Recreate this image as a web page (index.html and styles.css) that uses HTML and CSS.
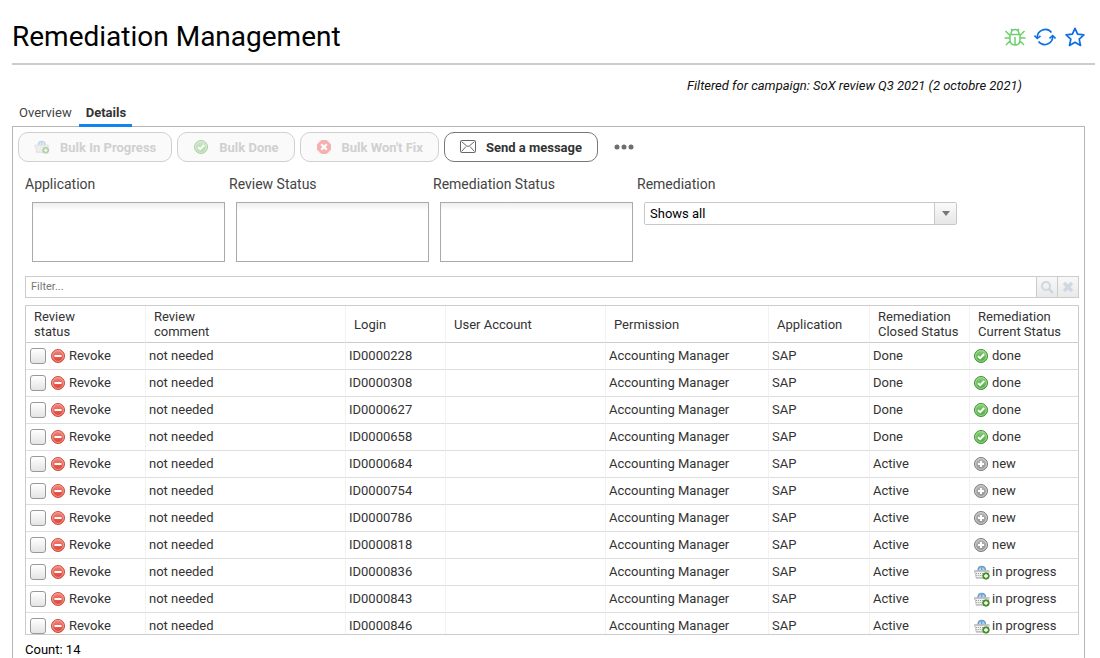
FILE: index.html
```html
<!DOCTYPE html>
<html lang="en">
<head>
<meta charset="utf-8">
<title>Remediation Management</title>
<link rel="stylesheet" href="styles.css">
</head>
<body>
<svg class="sprite" aria-hidden="true">
  <defs>
    <linearGradient id="g-red" x1="0" y1="0" x2="0" y2="1"><stop offset="0" stop-color="#f08a80"/><stop offset="1" stop-color="#dc3a2c"/></linearGradient>
    <linearGradient id="g-green" x1="0" y1="0" x2="0" y2="1"><stop offset="0" stop-color="#8bd07a"/><stop offset="1" stop-color="#45a838"/></linearGradient>
    <linearGradient id="g-gray" x1="0" y1="0" x2="0" y2="1"><stop offset="0" stop-color="#b8b8b8"/><stop offset="1" stop-color="#939393"/></linearGradient>
  </defs>
  <symbol id="revoke" viewBox="0 0 14 14">
    <circle cx="7" cy="7" r="6.5" fill="url(#g-red)" stroke="#cf4a3f"/>
    <circle cx="7" cy="7" r="5.4" fill="none" stroke="#f6aaa2" stroke-width=".8"/>
    <rect x="3.5" y="6" width="7" height="2" fill="#fff"/>
  </symbol>
  <symbol id="done" viewBox="0 0 14 14">
    <circle cx="7" cy="7" r="6.5" fill="url(#g-green)" stroke="#3f8f35"/>
    <circle cx="7" cy="7" r="5.4" fill="none" stroke="#b0e0a5" stroke-width=".8"/>
    <path d="M4 7.2 6.2 9.2 10.2 5" fill="none" stroke="#fff" stroke-width="1.9"/>
  </symbol>
  <symbol id="new" viewBox="0 0 14 14">
    <circle cx="7" cy="7" r="6.5" fill="url(#g-gray)" stroke="#7c7c7c"/>
    <circle cx="7" cy="7" r="5.4" fill="none" stroke="#d8d8d8" stroke-width=".8"/>
    <path d="M7 4v6M4 7h6" stroke="#fff" stroke-width="2"/>
  </symbol>
  <symbol id="cross" viewBox="0 0 14 14">
    <path d="M4.2.5h5.6l3.7 3.7v5.6l-3.7 3.7H4.2L.5 9.8V4.2z" fill="#f0433e" stroke="#e2574e"/>
    <path d="m4.2 4.2 5.6 5.6M9.8 4.2 4.2 9.8" stroke="#fff" stroke-width="2.3"/>
  </symbol>
  <symbol id="basket" viewBox="0 0 16 15">
    <path d="M4 6C4 3 5.500 1.500 7.700 1.500S11.500 3 11.500 6" fill="#b4d2ea" stroke="#6aa0cc" stroke-width="1.500"/>
    <path d="M7.700 1v5" stroke="#6aa0cc" stroke-width="1.200"/>
    <path d="M.4 5.500h14.700v2h-.8l-1 5.800H2.200l-1-5.800H.4z" fill="#f2f2f2" stroke="#b0b0b0" stroke-width=".7"/>
    <path d="M1 6.500h13.500" stroke="#c4c4c4"/>
    <path d="M2 8.500h11.500M2.300 10.500h10.500M2.600 12.500h10" stroke="#9a9a9a" stroke-dasharray="1 1"/>
    <circle cx="12" cy="11" r="3.300" fill="#4c9b2b" stroke="#39791f" stroke-width=".7"/>
    <path d="M12 9v4M10 11h4" stroke="#fff" stroke-width="1.300"/>
  </symbol>
</svg>

<header class="page-header">
  <h1>Remediation Management</h1>
  <div class="page-actions">
    <button type="button" class="icon-button bug" aria-label="Debug">
      <svg viewBox="0 0 22 20" width="22" height="20" fill="none" stroke="currentColor" stroke-width="1.500"><path d="M7 7.500C7 4 8.500 2.500 11 2.500S15 4 15 7.500M6 7.500h10v5c0 3.500-2 5.500-5 5.500s-5-2-5-5.500zM11 10v8M8 3.500 7 2M14 3.500 15 2M6 8.500 1.500 4M16 8.500 20.500 4M6 11H.5M16 11h5.500M6.500 13.500 2 18M15.500 13.500 20 18"/></svg>
    </button>
    <button type="button" class="icon-button" aria-label="Refresh">
      <svg viewBox="0 0 22 20" width="22" height="20" fill="none" stroke="currentColor" stroke-width="1.600"><path d="M17.500 5.500A8 8 0 0 0 3.300 11M4.500 14.500A8 8 0 0 0 18.700 9"/><path d="m.5 8.500 2.800 3 3.200-2.700M15.500 11.300l3.200-2.800 2.800 3"/></svg>
    </button>
    <button type="button" class="icon-button" aria-label="Add to favourites">
      <svg viewBox="0 0 22 20" width="22" height="20" fill="none" stroke="currentColor" stroke-width="1.700" stroke-linejoin="round"><path d="m11 1.300 2.600 5.900 6.300.7-4.700 4.300 1.300 6.300L11 15.300l-5.500 3.200 1.300-6.300L2.100 7.900l6.300-.7z"/></svg>
    </button>
  </div>
</header>

<p class="campaign">Filtered for campaign: SoX review Q3 2021 (2 octobre 2021)</p>

<nav class="tabs">
  <a class="tab" href="#overview">Overview</a>
  <a class="tab active" href="#details" aria-current="page">Details</a>
</nav>

<main class="panel" id="details">
  <div class="toolbar">
    <button type="button" class="action" disabled><svg class="icon wide"><use href="#basket"/></svg>Bulk In Progress</button>
    <button type="button" class="action" disabled><svg class="icon wide"><use href="#done"/></svg>Bulk Done</button>
    <button type="button" class="action" disabled><svg class="icon wide"><use href="#cross"/></svg>Bulk Won't Fix</button>
    <button type="button" class="action"><svg class="icon wide" viewBox="0 0 16 14" fill="none" stroke="#666"><rect x=".5" y=".5" width="15" height="12" rx="1"/><path d="m1.500 1.500 5 4.300q1.500 1.200 3 0l5-4.300M1.500 11.500l4.500-5M14.500 11.500 10 6.500"/></svg>Send a message</button>
    <button type="button" class="more" aria-label="More actions"><svg viewBox="0 0 20 6" width="20" height="6" fill="#6e6e6e"><circle cx="3" cy="3" r="2.500"/><circle cx="10" cy="3" r="2.500"/><circle cx="17" cy="3" r="2.500"/></svg></button>
  </div>

  <div class="criteria">
    <div class="field"><label for="application">Application</label><textarea id="application"></textarea></div>
    <div class="field"><label for="review">Review Status</label><textarea id="review"></textarea></div>
    <div class="field"><label for="status">Remediation Status</label><textarea id="status"></textarea></div>
    <div class="field select-field"><label for="remediation">Remediation</label>
      <div class="select-box"><select id="remediation"><option>Shows all</option></select><span class="arrow"></span></div>
    </div>
  </div>

  <div class="search">
    <input type="text" placeholder="Filter..." aria-label="Filter">
    <button type="button" aria-label="Search"><svg viewBox="0 0 14 14" width="14" height="14" fill="none" stroke="#d0d7e0" stroke-width="2"><circle cx="6" cy="6" r="4"/><path d="m9 9 4 4" stroke-width="2.500"/></svg></button>
    <button type="button" aria-label="Clear"><svg viewBox="0 0 14 14" width="14" height="14" stroke="#d0d7e0" stroke-width="3.500"><path d="m3 3 8 8M11 3l-8 8"/></svg></button>
  </div>

  <div class="grid">
    <table>
      <colgroup><col class="c-status"><col class="c-comment"><col class="c-login"><col class="c-account"><col class="c-permission"><col class="c-app"><col class="c-closed"><col class="c-current"></colgroup>
      <thead><tr><th>Review<br>status</th><th>Review<br>comment</th><th>Login</th><th>User Account</th><th>Permission</th><th>Application</th><th>Remediation<br>Closed Status</th><th>Remediation<br>Current Status</th></tr></thead>
      <tbody>
        <tr><td><label class="cell"><input type="checkbox"><svg class="icon"><use href="#revoke"/></svg>Revoke</label></td><td>not needed</td><td>ID0000228</td><td></td><td>Accounting Manager</td><td>SAP</td><td>Done</td><td><span class="cell"><svg class="icon"><use href="#done"/></svg>done</span></td></tr>
        <tr><td><label class="cell"><input type="checkbox"><svg class="icon"><use href="#revoke"/></svg>Revoke</label></td><td>not needed</td><td>ID0000308</td><td></td><td>Accounting Manager</td><td>SAP</td><td>Done</td><td><span class="cell"><svg class="icon"><use href="#done"/></svg>done</span></td></tr>
        <tr><td><label class="cell"><input type="checkbox"><svg class="icon"><use href="#revoke"/></svg>Revoke</label></td><td>not needed</td><td>ID0000627</td><td></td><td>Accounting Manager</td><td>SAP</td><td>Done</td><td><span class="cell"><svg class="icon"><use href="#done"/></svg>done</span></td></tr>
        <tr><td><label class="cell"><input type="checkbox"><svg class="icon"><use href="#revoke"/></svg>Revoke</label></td><td>not needed</td><td>ID0000658</td><td></td><td>Accounting Manager</td><td>SAP</td><td>Done</td><td><span class="cell"><svg class="icon"><use href="#done"/></svg>done</span></td></tr>
        <tr><td><label class="cell"><input type="checkbox"><svg class="icon"><use href="#revoke"/></svg>Revoke</label></td><td>not needed</td><td>ID0000684</td><td></td><td>Accounting Manager</td><td>SAP</td><td>Active</td><td><span class="cell"><svg class="icon"><use href="#new"/></svg>new</span></td></tr>
        <tr><td><label class="cell"><input type="checkbox"><svg class="icon"><use href="#revoke"/></svg>Revoke</label></td><td>not needed</td><td>ID0000754</td><td></td><td>Accounting Manager</td><td>SAP</td><td>Active</td><td><span class="cell"><svg class="icon"><use href="#new"/></svg>new</span></td></tr>
        <tr><td><label class="cell"><input type="checkbox"><svg class="icon"><use href="#revoke"/></svg>Revoke</label></td><td>not needed</td><td>ID0000786</td><td></td><td>Accounting Manager</td><td>SAP</td><td>Active</td><td><span class="cell"><svg class="icon"><use href="#new"/></svg>new</span></td></tr>
        <tr><td><label class="cell"><input type="checkbox"><svg class="icon"><use href="#revoke"/></svg>Revoke</label></td><td>not needed</td><td>ID0000818</td><td></td><td>Accounting Manager</td><td>SAP</td><td>Active</td><td><span class="cell"><svg class="icon"><use href="#new"/></svg>new</span></td></tr>
        <tr><td><label class="cell"><input type="checkbox"><svg class="icon"><use href="#revoke"/></svg>Revoke</label></td><td>not needed</td><td>ID0000836</td><td></td><td>Accounting Manager</td><td>SAP</td><td>Active</td><td><span class="cell"><svg class="icon basket"><use href="#basket"/></svg>in progress</span></td></tr>
        <tr><td><label class="cell"><input type="checkbox"><svg class="icon"><use href="#revoke"/></svg>Revoke</label></td><td>not needed</td><td>ID0000843</td><td></td><td>Accounting Manager</td><td>SAP</td><td>Active</td><td><span class="cell"><svg class="icon basket"><use href="#basket"/></svg>in progress</span></td></tr>
        <tr><td><label class="cell"><input type="checkbox"><svg class="icon"><use href="#revoke"/></svg>Revoke</label></td><td>not needed</td><td>ID0000846</td><td></td><td>Accounting Manager</td><td>SAP</td><td>Active</td><td><span class="cell"><svg class="icon basket"><use href="#basket"/></svg>in progress</span></td></tr>
      </tbody>
    </table>
  </div>
  <p class="count">Count: 14</p>
</main>
</body>
</html>
```
FILE: styles.css
```css
* { box-sizing: border-box; }
body {
  margin: 0;
  height: 100vh;
  padding: 8px 5px 0 12px;
  display: flex;
  flex-direction: column;
  overflow: hidden;
  background: #fff;
  color: #333;
  font: 13px/15px Roboto, "Liberation Sans", sans-serif;
}
button, input, select, textarea { font: inherit; color: inherit; margin: 0; }
.sprite { position: absolute; width: 0; height: 0; }

.page-header {
  display: flex;
  align-items: center;
  justify-content: space-between;
  height: 57px;
  flex: none;
  padding-top: 2px;
  border-bottom: 2px solid #ccc;
}
h1 { margin: 0; font-size: 28px; line-height: 36px; font-weight: 400; color: #000; }
.page-actions { display: flex; gap: 8px; padding-right: 9px; }
.icon-button { display: flex; padding: 0; border: 0; background: none; color: #0b6fe0; }
.icon-button.bug { color: #6bd06b; }

.campaign { margin: 13px 73px 0 0; text-align: right; font-style: italic; color: #111; }

.tabs {
  position: relative;
  z-index: 1;
  display: flex;
  flex: none;
  height: 25px;
  margin: 9px 0 -1px;
}
.tab { padding: 3px 7px 0; color: #444; text-decoration: none; }
.tab.active { padding: 3px 6px 0 7px; font-weight: 700; color: #333; border-bottom: 3px solid #1385ef; }

.panel {
  flex: 1;
  min-height: 0;
  margin-right: 10px;
  padding: 5px 5px 0;
  display: flex;
  flex-direction: column;
  border: 1px solid #b5b5b5;
  border-bottom: 0;
}

.toolbar { display: flex; gap: 5px; flex: none; }
.action {
  display: flex;
  align-items: center;
  gap: 10px;
  height: 30px;
  padding: 0 15px;
  border: 1px solid #777;
  border-radius: 10px;
  background: #fff;
  font-weight: 700;
  color: #333;
}
.action:disabled { border-color: #d0d0d0; background: #fafafa; color: #d0d0d0; }
.action:disabled .icon { opacity: .4; }
.icon { width: 14px; height: 14px; flex: none; }
.icon.wide { width: 16px; }
.icon.basket { width: 16px; height: 15px; margin-right: -2px; }
.more { display: flex; align-items: center; padding: 0 11px; border: 0; background: none; }

.criteria { display: flex; flex: none; padding: 15px 7px 0; gap: 10px; }
.field { width: 194px; }
.field label { display: block; font-size: 14px; color: #444; }
.field textarea, .select-box { display: block; margin: 10px 0 0 7px; }
.field textarea {
  width: 193px;
  height: 60px;
  padding: 4px;
  resize: none;
  border: 1px solid #aaa;
  background: linear-gradient(#eee, #fff 8px);
}
.select-field { width: 320px; }
.select-box { display: flex; width: 313px; height: 23px; border: 1px solid #c8c8c8; border-radius: 2px; }
.select-box select { flex: 1; min-width: 0; padding: 0 5px; border: 0; appearance: none; background: #fff; color: #000; }
.arrow { display: flex; align-items: center; justify-content: center; width: 22px; border-left: 1px solid #c8c8c8; background: linear-gradient(#fafafa, #e6e6e6); }
.arrow::before { content: ""; border: 4px solid transparent; border-top: 5px solid #777; border-bottom: 0; }

.search { display: flex; flex: none; height: 22px; margin: 14px 0 0 7px; border: 1px solid #ccc; }
.search input { flex: 1; min-width: 0; padding: 0 5px 2px; border: 0; font-size: 11px; background: #fff; }
.search input::placeholder { color: #777; opacity: 1; }
.search button { display: flex; align-items: center; justify-content: center; width: 21px; padding: 0; border: 0; border-left: 1px solid #ccc; background: linear-gradient(#f8f8f8, #e9e9e9); }

.grid { flex: 1; min-height: 0; overflow: hidden; margin: 7px 0 0 7px; border: 1px solid #ccc; }
table { width: 100%; table-layout: fixed; border-collapse: separate; border-spacing: 0; }
.c-status { width: 119px; }
.c-comment { width: 200px; }
.c-login, .c-closed { width: 100px; }
.c-account { width: 160px; }
.c-permission { width: 163px; }
.c-app { width: 101px; }
th { height: 37px; padding: 0 8px; font-weight: 400; text-align: left; white-space: nowrap; }
td { height: 27px; padding: 0 3px 2px; white-space: nowrap; }
th, td { border-bottom: 1px solid #ddd; border-left: 1px solid #f2f2f2; }
td:last-child { padding-left: 4px; }
th { border-bottom-color: #ccc; }
th:first-child, td:first-child { border-left: 0; }
.cell { display: flex; align-items: center; gap: 4px; }
.cell input {
  appearance: none;
  width: 16px;
  height: 16px;
  margin: 2px 1px 0;
  border: 1px solid #999;
  border-radius: 3px;
  background: linear-gradient(#fff, #e4e4e4);
}
.cell .icon { margin-top: 2px; }
.count { flex: none; margin: 7px 0 1px 7px; color: #000; }
```
